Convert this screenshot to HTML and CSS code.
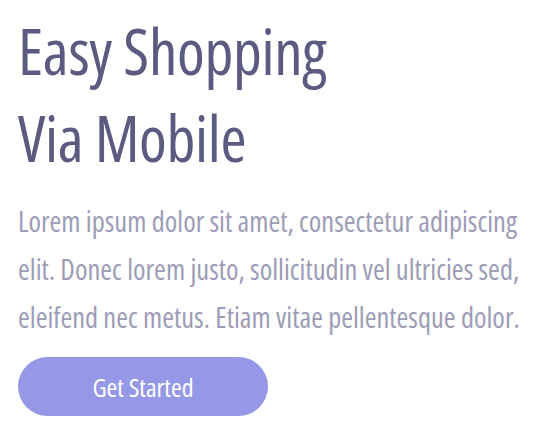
FILE: index.html
```html
<!DOCTYPE html>
<html>
<head>
<meta charset="utf-8">
<title>Easy Shopping Via Mobile</title>
<link rel="stylesheet" href="styles.css">
</head>
<body>
<section class="hero">
  <h1 class="hero-title">Easy Shopping<br>Via Mobile</h1>
  <p class="hero-text">Lorem ipsum dolor sit amet, consectetur adipiscing elit. Donec lorem justo, sollicitudin vel ultricies sed, eleifend nec metus. Etiam vitae pellentesque dolor.</p>
  <a class="hero-btn" href="#">Get Started</a>
</section>
</body>
</html>
```
FILE: styles.css
```css
html, body {
  margin: 0;
  padding: 0;
  background: #ffffff;
}
.hero {
  padding: 7px 18px 0 18px;
  font-family: "Open Sans", "Liberation Sans", sans-serif;
  font-stretch: 75%;
  display: flex;
  flex-direction: column;
  align-items: flex-start;
}
.hero-title {
  margin: 0;
  font-size: 63px;
  line-height: 87px;
  font-weight: 500;
  letter-spacing: -0.3px;
  color: #5b5a80;
}
.hero-text {
  margin: 16px 0 0 0;
  max-width: 530px;
  font-size: 28.5px;
  line-height: 48px;
  font-weight: 400;
  color: #9d9cb6;
}
.hero-btn {
  margin-top: 16px;
  width: 250px;
  height: 59px;
  border-radius: 30px;
  background: #9598e6;
  color: #ffffff;
  text-decoration: none;
  font-size: 26px;
  font-weight: 500;
  display: flex;
  align-items: center;
  justify-content: center;
}
```
